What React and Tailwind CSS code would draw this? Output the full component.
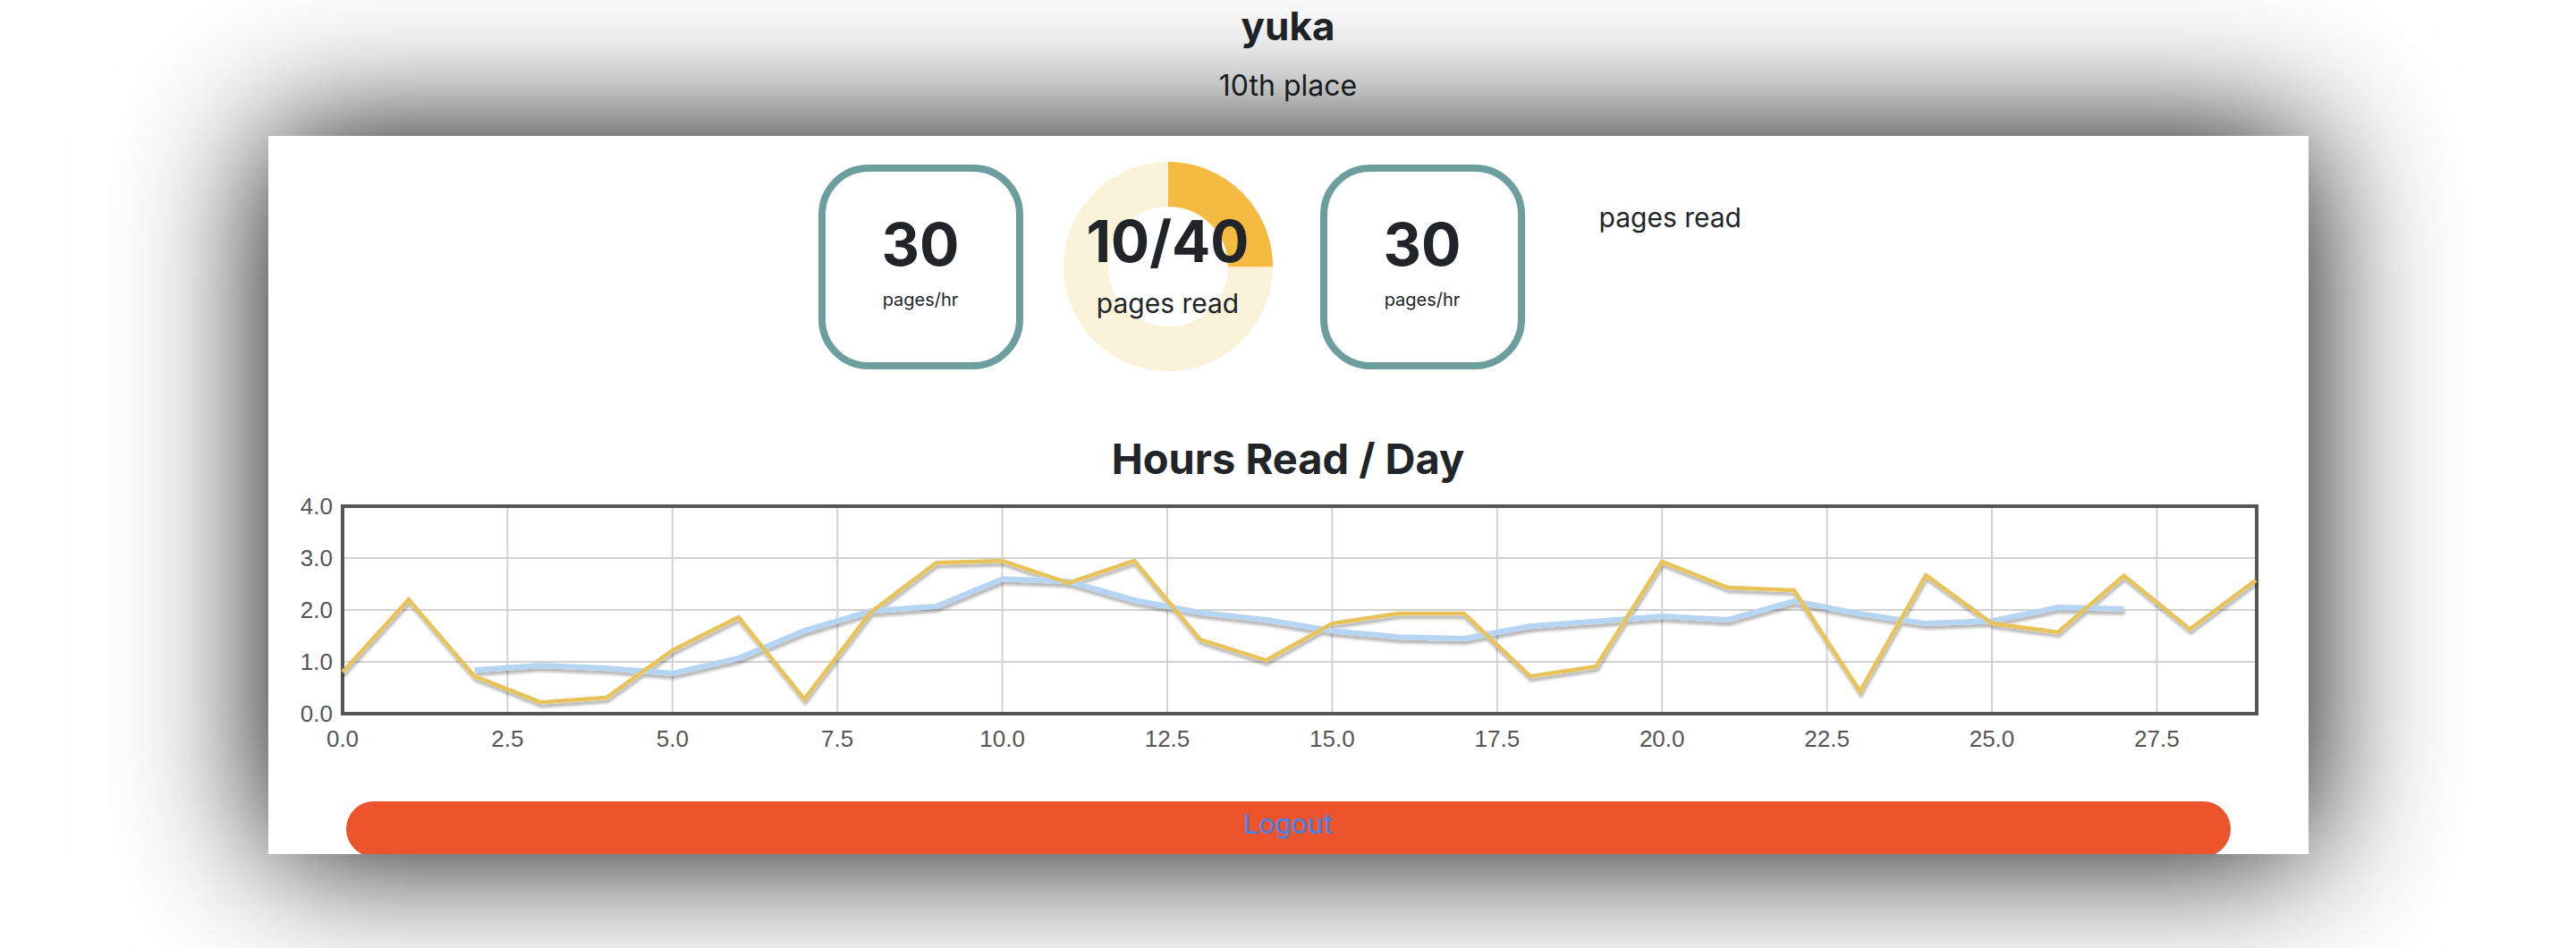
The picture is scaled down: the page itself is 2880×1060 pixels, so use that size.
const HOURS = [
  0.8, 2.2, 0.72, 0.22, 0.31, 1.22, 1.86, 0.28, 1.95, 2.91, 2.95, 2.52, 2.95, 1.43, 1.03,
  1.74, 1.93, 1.93, 0.72, 0.91, 2.93, 2.43, 2.38, 0.43, 2.67, 1.74, 1.57, 2.66, 1.63, 2.57,
];

// rolling average, starts at day 2
const AVERAGE = [
  0.84, 0.93, 0.88, 0.78, 1.07, 1.6, 1.98, 2.07, 2.6, 2.55, 2.19, 1.95, 1.81, 1.6, 1.48,
  1.45, 1.69, 1.78, 1.88, 1.81, 2.17, 1.93, 1.74, 1.79, 2.05, 2.02,
];

const X0 = 83;
const X_STEP = 73.76;
const Y0 = 257;
const Y_STEP = 58;

const px = v => X0 + v * X_STEP;
const py = v => Y0 - v * Y_STEP;

function toPath(values, start = 0) {
  return values.map((v, i) => `${i === 0 ? 'M' : 'L'}${px(start + i).toFixed(1)},${py(v).toFixed(1)}`).join(' ');
}

function StatBox({ value, label }) {
  return (
    <div className="w-[229px] h-[229px] border-[8px] border-[#6d9e9e] rounded-[56px] flex flex-col items-center pt-[48px]">
      <div className="text-[66px] leading-[66px] font-bold">{value}</div>
      <div className="text-[20px] leading-[24px] mt-[17px]">{label}</div>
    </div>
  );
}

function Donut({ done, total }) {
  const r = 92;
  const c = 2 * Math.PI * r;
  const part = (done / total) * c;
  return (
    <div className="grid w-[234px] h-[234px] ml-[45px]">
      <svg width="234" height="234" viewBox="0 0 234 234" className="[grid-area:1/1]">
        <circle cx="117" cy="117" r={r} fill="none" stroke="#fbf2da" strokeWidth="50" />
        <circle
          cx="117"
          cy="117"
          r={r}
          fill="none"
          stroke="#f5bb40"
          strokeWidth="50"
          strokeDasharray={`${part} ${c}`}
          transform="rotate(-90 117 117)"
        />
      </svg>
      <div className="[grid-area:1/1] flex flex-col items-center pt-[57px]">
        <div className="text-[64px] leading-[64px] font-bold">
          {done}/{total}
        </div>
        <div className="text-[30px] leading-[36px] mt-[19px]">pages read</div>
      </div>
    </div>
  );
}

function HoursChart() {
  const xTicks = [0, 2.5, 5, 7.5, 10, 12.5, 15, 17.5, 20, 22.5, 25, 27.5];
  const yTicks = [0, 1, 2, 3, 4];
  return (
    <svg width="2281" height="300" viewBox="0 0 2281 300" className="block shrink-0">
      <defs>
        <filter id="lineShadow" x="-5%" y="-20%" width="110%" height="140%">
          <feDropShadow dx="1" dy="4" stdDeviation="1.5" floodColor="#000" floodOpacity="0.28" />
        </filter>
      </defs>
      {xTicks.slice(1).map(t => (
        <line key={t} x1={px(t)} x2={px(t)} y1={py(4)} y2={py(0)} stroke="#d2d2d2" strokeWidth="2" />
      ))}
      {yTicks.slice(1, 4).map(t => (
        <line key={t} x1={px(0)} x2={px(29)} y1={py(t)} y2={py(t)} stroke="#d2d2d2" strokeWidth="2" />
      ))}
      <rect x={X0} y={py(4)} width={px(29) - X0 + 1} height={py(0) - py(4)} fill="none" stroke="#555" strokeWidth="4" />
      <g fontFamily="'Liberation Sans', Arial, sans-serif" fontSize="26" fill="#555">
        {yTicks.map(t => (
          <text key={t} x="72" y={py(t) + 9} textAnchor="end">
            {t.toFixed(1)}
          </text>
        ))}
        {xTicks.map(t => (
          <text key={t} x={px(t)} y="294" textAnchor="middle">
            {t.toFixed(1)}
          </text>
        ))}
      </g>
      <g fill="none" strokeLinejoin="miter" filter="url(#lineShadow)">
        <path d={toPath(AVERAGE, 2)} stroke="#b6d5f2" strokeWidth="6" />
        <path d={toPath(HOURS)} stroke="#e8c35a" strokeWidth="4.5" />
      </g>
    </svg>
  );
}

export default function App() {
  return (
    <div className="h-[1060px] bg-white flex flex-col items-center text-[#212529] font-['Inter',sans-serif]">
      <h1 className="mt-[7px] text-[44px] leading-[44px] font-bold">yuka</h1>
      <p className="mt-[29px] text-[32px] leading-[32px]">10th place</p>

      <div className="mt-[40px] w-[2281px] h-[803px] bg-white overflow-hidden shadow-[0_0_150px_0_rgba(0,0,0,1)] flex flex-col">
        <div className="flex shrink-0 justify-center items-center pt-[29px] pr-[18px] h-[263px]">
          <StatBox value="30" label="pages/hr" />
          <Donut done={10} total={40} />
          <div className="ml-[53px]">
            <StatBox value="30" label="pages/hr" />
          </div>
          <div className="ml-[83px] self-start mt-[44px] text-[30px] leading-[36px] w-[160px] whitespace-nowrap">
            pages read
          </div>
        </div>

        <h2 className="mt-[70px] shrink-0 text-center text-[47px] leading-[56px] font-bold">Hours Read / Day</h2>

        <HoursChart />

        <button className="mt-[55px] mx-auto w-[2107px] h-[62px] shrink-0 rounded-full bg-[#ec552b] text-[#3d84f5] font-['Roboto',sans-serif] text-[32px] leading-[32px] pt-[9px] flex justify-center items-start">
          Logout
        </button>
      </div>
    </div>
  );
}
